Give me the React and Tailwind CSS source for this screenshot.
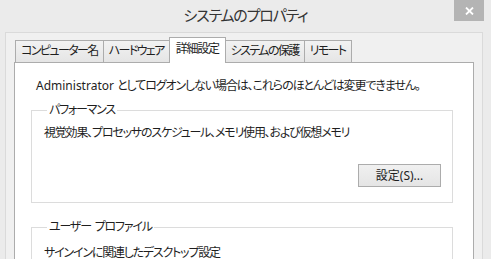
import React from 'react'

const TABS = ['コンピューター名', 'ハードウェア', '詳細設定', 'システムの保護', 'リモート']

function GroupBox({ title, children, className = '' }) {
  return (
    <fieldset className={`border border-[#dcdcdc] ml-[16px] mr-[20px] px-[11px] ${className}`}>
      <legend className="px-[2px] ml-[4px] text-[12px] leading-[14px] tracking-[-1.2px] text-[#1e1e1e] whitespace-pre">{title}</legend>
      {children}
    </fieldset>
  )
}

export default function App() {
  return (
    <div
      className="w-[491px] h-[259px] overflow-hidden bg-[#ebebeb] flex flex-col [font-feature-settings:'palt'] text-[#1e1e1e]"
      style={{ fontFamily: "'Noto Sans', 'Noto Sans CJK JP', sans-serif" }}
    >
      {/* title bar */}
      <div className="relative h-[32px] shrink-0 flex items-center justify-center">
        <span className="text-[15px] text-[#333] pb-[1px] tracking-[-1.2px]">システムのプロパティ</span>
        <div className="absolute right-[7px] top-0 w-[30px] h-[21px] bg-[#b4b4b4] flex items-center justify-center">
          <svg width="9" height="8" viewBox="0 0 9 8">
            <path d="M1 0.5 L8 7.5 M8 0.5 L1 7.5" stroke="#fff" strokeWidth="1.8" />
          </svg>
        </div>
      </div>

      {/* client area */}
      <div className="flex-1 ml-[5px] mr-[8px] bg-[#f0f0f0] border-l border-t border-r border-[#dadada] px-[8px] pt-[4px] flex flex-col">
        <div className="flex items-end h-[25px] pl-[1px] relative z-10">
          {TABS.map((t, i) => {
            const sel = i === 2
            return (
              <div
                key={t}
                className={
                  sel
                    ? 'h-[26px] -mb-px bg-white border border-b-0 border-[#acacac] -ml-px px-[6px] pt-[1px] text-[12px] leading-[20px] tracking-[-1.3px]'
                    : 'h-[22px] bg-gradient-to-b from-[#f2f2f2] to-[#e5e5e5] border border-b-0 border-[#acacac] -ml-px first:ml-0 px-[5px] text-[12px] leading-[20px] tracking-[-1.6px]'
                }
              >
                {t}
              </div>
            )
          })}
        </div>
        <div className="flex-1 bg-white border border-[#acacac] pt-[14px]">
          <div className="pl-[21px] text-[12px] leading-[18px] tracking-[-1.1px]">
            <span className="tracking-normal">Administrator </span>としてログオンしない場合は、これらのほとんどは変更できません。
          </div>
          <GroupBox title="パフォーマンス" className="mt-[8px] h-[100px]">
            <div className="text-[12px] leading-[18px] pl-[1px] pt-[7px] tracking-[-1.2px]">
              視覚効果、プロセッサのスケジュール、メモリ使用、および仮想メモリ
            </div>
            <div className="flex justify-end mt-[22px]">
              <button className="w-[83px] h-[23px] border border-[#acacac] bg-gradient-to-b from-[#f0f0f0] to-[#e5e5e5] text-[12px] leading-[20px] text-[#1e1e1e]">
                設定(S)...
              </button>
            </div>
          </GroupBox>
          <GroupBox title={'ユーザー\u00a0\u00a0プロファイル'} className="mt-[17px] h-[60px]">
            <div className="text-[12px] leading-[14px] pl-[1px] pt-[12px] tracking-[-1.2px]">
              サインインに関連したデスクトップ設定
            </div>
          </GroupBox>
        </div>
      </div>
    </div>
  )
}
